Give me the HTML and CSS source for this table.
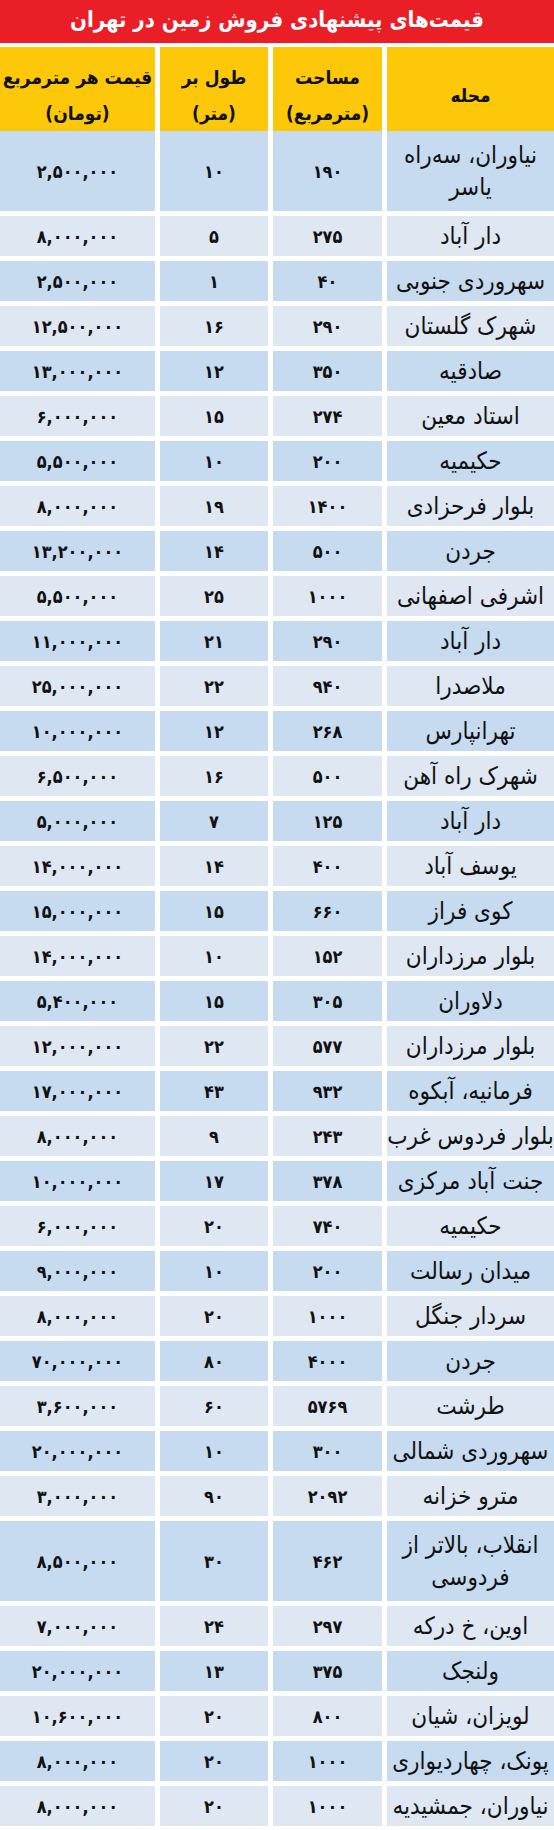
FILE: index.html
```html
<!DOCTYPE html>
<html lang="fa" dir="rtl">
<head>
<meta charset="utf-8">
<title>قیمت‌های پیشنهادی فروش زمین در تهران</title>
<link rel="stylesheet" href="styles.css">
</head>
<body>
<div class="page">
  <h1 class="title">قیمت‌های پیشنهادی فروش زمین در تهران</h1>
  <div class="head">
    <div class="hcell"><span>محله</span></div>
    <div class="hcell"><span>مساحت</span><span>(مترمربع)</span></div>
    <div class="hcell"><span>طول بر</span><span>(متر)</span></div>
    <div class="hcell narrow"><span>قیمت هر مترمربع</span><span>(تومان)</span></div>
  </div>
  <div class="rows">
    <div class="row tall"><div class="cell name">نیاوران، سه‌راه<br>یاسر</div><div class="cell num">۱۹۰</div><div class="cell num">۱۰</div><div class="cell num">۲,۵۰۰,۰۰۰</div></div>
    <div class="row"><div class="cell name">دار آباد</div><div class="cell num">۲۷۵</div><div class="cell num">۵</div><div class="cell num">۸,۰۰۰,۰۰۰</div></div>
    <div class="row"><div class="cell name">سهروردی جنوبی</div><div class="cell num">۴۰</div><div class="cell num">۱</div><div class="cell num">۲,۵۰۰,۰۰۰</div></div>
    <div class="row"><div class="cell name">شهرک گلستان</div><div class="cell num">۲۹۰</div><div class="cell num">۱۶</div><div class="cell num">۱۲,۵۰۰,۰۰۰</div></div>
    <div class="row"><div class="cell name">صادقیه</div><div class="cell num">۳۵۰</div><div class="cell num">۱۲</div><div class="cell num">۱۳,۰۰۰,۰۰۰</div></div>
    <div class="row"><div class="cell name">استاد معین</div><div class="cell num">۲۷۴</div><div class="cell num">۱۵</div><div class="cell num">۶,۰۰۰,۰۰۰</div></div>
    <div class="row"><div class="cell name">حکیمیه</div><div class="cell num">۲۰۰</div><div class="cell num">۱۰</div><div class="cell num">۵,۵۰۰,۰۰۰</div></div>
    <div class="row"><div class="cell name">بلوار فرحزادی</div><div class="cell num">۱۴۰۰</div><div class="cell num">۱۹</div><div class="cell num">۸,۰۰۰,۰۰۰</div></div>
    <div class="row"><div class="cell name">جردن</div><div class="cell num">۵۰۰</div><div class="cell num">۱۴</div><div class="cell num">۱۳,۲۰۰,۰۰۰</div></div>
    <div class="row"><div class="cell name">اشرفی اصفهانی</div><div class="cell num">۱۰۰۰</div><div class="cell num">۲۵</div><div class="cell num">۵,۵۰۰,۰۰۰</div></div>
    <div class="row"><div class="cell name">دار آباد</div><div class="cell num">۲۹۰</div><div class="cell num">۲۱</div><div class="cell num">۱۱,۰۰۰,۰۰۰</div></div>
    <div class="row"><div class="cell name">ملاصدرا</div><div class="cell num">۹۴۰</div><div class="cell num">۲۲</div><div class="cell num">۲۵,۰۰۰,۰۰۰</div></div>
    <div class="row"><div class="cell name">تهرانپارس</div><div class="cell num">۲۶۸</div><div class="cell num">۱۲</div><div class="cell num">۱۰,۰۰۰,۰۰۰</div></div>
    <div class="row"><div class="cell name">شهرک راه آهن</div><div class="cell num">۵۰۰</div><div class="cell num">۱۶</div><div class="cell num">۶,۵۰۰,۰۰۰</div></div>
    <div class="row"><div class="cell name">دار آباد</div><div class="cell num">۱۲۵</div><div class="cell num">۷</div><div class="cell num">۵,۰۰۰,۰۰۰</div></div>
    <div class="row"><div class="cell name">یوسف آباد</div><div class="cell num">۴۰۰</div><div class="cell num">۱۴</div><div class="cell num">۱۴,۰۰۰,۰۰۰</div></div>
    <div class="row"><div class="cell name">کوی فراز</div><div class="cell num">۶۶۰</div><div class="cell num">۱۵</div><div class="cell num">۱۵,۰۰۰,۰۰۰</div></div>
    <div class="row"><div class="cell name">بلوار مرزداران</div><div class="cell num">۱۵۲</div><div class="cell num">۱۰</div><div class="cell num">۱۴,۰۰۰,۰۰۰</div></div>
    <div class="row"><div class="cell name">دلاوران</div><div class="cell num">۳۰۵</div><div class="cell num">۱۵</div><div class="cell num">۵,۴۰۰,۰۰۰</div></div>
    <div class="row"><div class="cell name">بلوار مرزداران</div><div class="cell num">۵۷۷</div><div class="cell num">۲۲</div><div class="cell num">۱۲,۰۰۰,۰۰۰</div></div>
    <div class="row"><div class="cell name">فرمانیه، آبکوه</div><div class="cell num">۹۳۲</div><div class="cell num">۴۳</div><div class="cell num">۱۷,۰۰۰,۰۰۰</div></div>
    <div class="row"><div class="cell name">بلوار فردوس غرب</div><div class="cell num">۲۴۳</div><div class="cell num">۹</div><div class="cell num">۸,۰۰۰,۰۰۰</div></div>
    <div class="row"><div class="cell name">جنت آباد مرکزی</div><div class="cell num">۳۷۸</div><div class="cell num">۱۷</div><div class="cell num">۱۰,۰۰۰,۰۰۰</div></div>
    <div class="row"><div class="cell name">حکیمیه</div><div class="cell num">۷۴۰</div><div class="cell num">۲۰</div><div class="cell num">۶,۰۰۰,۰۰۰</div></div>
    <div class="row"><div class="cell name">میدان رسالت</div><div class="cell num">۲۰۰</div><div class="cell num">۱۰</div><div class="cell num">۹,۰۰۰,۰۰۰</div></div>
    <div class="row"><div class="cell name">سردار جنگل</div><div class="cell num">۱۰۰۰</div><div class="cell num">۲۰</div><div class="cell num">۸,۰۰۰,۰۰۰</div></div>
    <div class="row"><div class="cell name">جردن</div><div class="cell num">۴۰۰۰</div><div class="cell num">۸۰</div><div class="cell num">۷۰,۰۰۰,۰۰۰</div></div>
    <div class="row"><div class="cell name">طرشت</div><div class="cell num">۵۷۶۹</div><div class="cell num">۶۰</div><div class="cell num">۳,۶۰۰,۰۰۰</div></div>
    <div class="row"><div class="cell name">سهروردی شمالی</div><div class="cell num">۳۰۰</div><div class="cell num">۱۰</div><div class="cell num">۲۰,۰۰۰,۰۰۰</div></div>
    <div class="row"><div class="cell name">مترو خزانه</div><div class="cell num">۲۰۹۲</div><div class="cell num">۹۰</div><div class="cell num">۳,۰۰۰,۰۰۰</div></div>
    <div class="row tall"><div class="cell name">انقلاب، بالاتر از<br>فردوسی</div><div class="cell num">۴۶۲</div><div class="cell num">۳۰</div><div class="cell num">۸,۵۰۰,۰۰۰</div></div>
    <div class="row"><div class="cell name">اوین، خ درکه</div><div class="cell num">۲۹۷</div><div class="cell num">۲۴</div><div class="cell num">۷,۰۰۰,۰۰۰</div></div>
    <div class="row"><div class="cell name">ولنجک</div><div class="cell num">۳۷۵</div><div class="cell num">۱۳</div><div class="cell num">۲۰,۰۰۰,۰۰۰</div></div>
    <div class="row"><div class="cell name">لویزان، شیان</div><div class="cell num">۸۰۰</div><div class="cell num">۲۰</div><div class="cell num">۱۰,۶۰۰,۰۰۰</div></div>
    <div class="row"><div class="cell name">پونک، چهاردیواری</div><div class="cell num">۱۰۰۰</div><div class="cell num">۲۰</div><div class="cell num">۸,۰۰۰,۰۰۰</div></div>
    <div class="row"><div class="cell name">نیاوران، جمشیدیه</div><div class="cell num">۱۰۰۰</div><div class="cell num">۲۰</div><div class="cell num">۸,۰۰۰,۰۰۰</div></div>
  </div>
</div>
</body>
</html>
```
FILE: styles.css
```css
html, body {
  margin: 0;
  padding: 0;
  background: #ffffff;
}
body {
  font-family: "DejaVu Sans Condensed", "DejaVu Sans", "Noto Sans", sans-serif;
  font-stretch: condensed;
  color: #111111;
  width: 554px;
  overflow: hidden;
}
.page {
  display: flex;
  flex-direction: column;
  gap: 4px;
}
.title {
  margin: 0;
  height: 43px;
  background: #e91e27;
  color: #ffffff;
  font-size: 22px;
  font-weight: bold;
  line-height: 40px;
  text-align: center;
  white-space: nowrap;
}
.head,
.row {
  display: grid;
  grid-template-columns: 167px 109px 108px 155px;
  column-gap: 5px;
}
.head {
  height: 80px;
}
.hcell {
  background: #fec80a;
  display: flex;
  flex-direction: column;
  align-items: center;
  justify-content: center;
  font-size: 19px;
  font-weight: bold;
  line-height: 36px;
  padding-top: 12px;
  white-space: nowrap;
}
.hcell.narrow {
  font-size: 19px;
}
.rows {
  display: flex;
  flex-direction: column;
  gap: 5px;
}
.row {
  height: 40px;
}
.row.tall {
  height: 80px;
}
.cell {
  display: flex;
  align-items: center;
  justify-content: center;
  text-align: center;
  white-space: nowrap;
  background: #c6dbf0;
}
.row:nth-child(even) .cell {
  background: #dfe7f3;
}
.name {
  font-size: 24px;
  line-height: 32px;
}
.num {
  font-size: 18px;
  font-weight: bold;
}
```
